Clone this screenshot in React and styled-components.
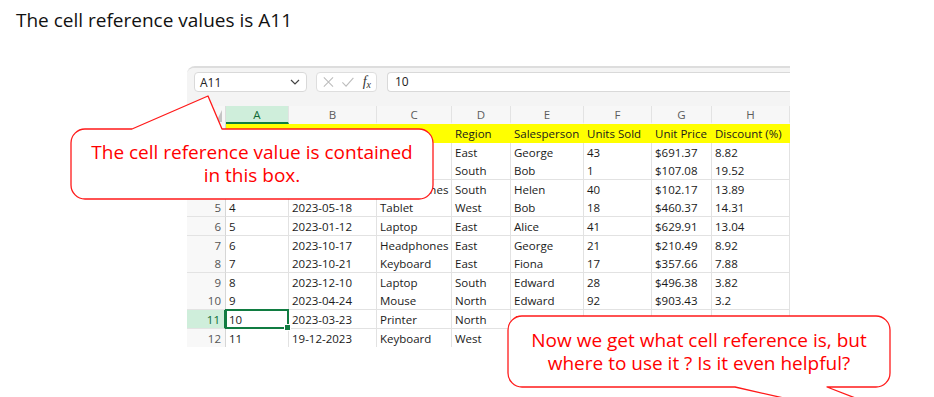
import React from 'react';
import styled, { createGlobalStyle } from 'styled-components';

const GlobalStyle = createGlobalStyle`
	html, body {
		margin: 0;
		padding: 0;
		background: #ffffff;
	}
	body {
		font-family: 'Open Sans', 'Noto Sans', sans-serif;
	}
`;

const COLS = '39px 63px 88px 75px 59px 73px 68px 60px 78px';
const LETTERS = ['A', 'B', 'C', 'D', 'E', 'F', 'G', 'H'];
const ROW_H = 18.6;

// cells hidden under the callouts are left blank
const rows = [
	['', '', '', 'Region', 'Salesperson', 'Units Sold', 'Unit Price', 'Discount (%)'],
	['', '', '', 'East', 'George', '43', '$691.37', '8.82'],
	['', '', '', 'South', 'Bob', '1', '$107.08', '19.52'],
	['', '', 'Headphones', 'South', 'Helen', '40', '$102.17', '13.89'],
	['4', '2023-05-18', 'Tablet', 'West', 'Bob', '18', '$460.37', '14.31'],
	['5', '2023-01-12', 'Laptop', 'East', 'Alice', '41', '$629.91', '13.04'],
	['6', '2023-10-17', 'Headphones', 'East', 'George', '21', '$210.49', '8.92'],
	['7', '2023-10-21', 'Keyboard', 'East', 'Fiona', '17', '$357.66', '7.88'],
	['8', '2023-12-10', 'Laptop', 'South', 'Edward', '28', '$496.38', '3.82'],
	['9', '2023-04-24', 'Mouse', 'North', 'Edward', '92', '$903.43', '3.2'],
	['10', '2023-03-23', 'Printer', 'North', 'Charlie', '55', '$781.22', '11.5'],
	['11', '19-12-2023', 'Keyboard', 'West', '', '', '', ''],
];

const Page = styled.div`
	position: relative;
	width: 934px;
	height: 397px;
	overflow: hidden;
	background: #fff;
`;

const Title = styled.h1`
	margin: 0;
	padding: 8px 0 0 16px;
	font-family: 'Open Sans', sans-serif;
	font-size: 19px;
	font-weight: 400;
	line-height: 24px;
	color: #111;
`;

const Sheet = styled.div`
	margin: 34px 0 0 187px;
	width: 603px;
	border-top: 2px solid #dddddd;
	border-top-left-radius: 8px;
	overflow: hidden;
	font-family: 'Open Sans', sans-serif;
	font-size: 11.5px;
	color: #1a1a1a;
`;

const Toolbar = styled.div`
	display: flex;
	align-items: flex-start;
	height: 38px;
	padding: 4px 0 0 7px;
	box-sizing: border-box;
	background: #f4f4f4;
`;

const NameBox = styled.div`
	display: flex;
	align-items: center;
	justify-content: space-between;
	width: 113px;
	height: 20px;
	padding: 0 6px 0 5px;
	box-sizing: border-box;
	background: #fff;
	border: 1px solid #d9d9d9;
	border-radius: 4px;
	font-size: 12px;
	color: #222;
`;

const FxBox = styled.div`
	display: flex;
	align-items: center;
	gap: 6px;
	width: 61px;
	height: 20px;
	margin-left: 9px;
	padding: 0 5px;
	box-sizing: border-box;
	background: #fff;
	border: 1px solid #dedede;
	border-radius: 4px;
`;

const Fx = styled.span`
	margin-left: 2px;
	font-family: 'Liberation Serif', serif;
	font-style: italic;
	font-size: 14px;
	color: #333;
	sub {
		font-size: 10px;
		vertical-align: -2px;
	}
`;

const FormulaInput = styled.div`
	flex: 1;
	height: 20px;
	margin-left: 10px;
	padding-left: 7px;
	box-sizing: border-box;
	background: #fff;
	border: 1px solid #d9d9d9;
	border-right: none;
	border-radius: 4px 0 0 4px;
	font-size: 12px;
	line-height: 18px;
	color: #222;
`;

const HeaderRow = styled.div`
	display: grid;
	grid-template-columns: ${COLS};
	height: 18px;
	background: #f7f7f7;
`;

const Corner = styled.div`
	display: flex;
	align-items: flex-end;
	justify-content: flex-end;
	padding: 0 3px 2px 0;
	border-right: 1px solid #dcdcdc;
`;

const ColHead = styled.div`
	display: flex;
	align-items: center;
	justify-content: center;
	box-sizing: border-box;
	border-right: 1px solid #e3e3e3;
	border-bottom: 2px solid ${(p) => (p.$active ? '#107c41' : '#f7f7f7')};
	background: ${(p) => (p.$active ? '#cfeedb' : 'transparent')};
	color: ${(p) => (p.$active ? '#0e6b35' : '#5c5c5c')};
	font-size: 11.5px;
`;

const Row = styled.div`
	display: grid;
	grid-template-columns: ${COLS};
	height: ${(p) => p.$h}px;
`;

const RowNum = styled.div`
	box-sizing: border-box;
	padding: 1px 4px 0 0;
	text-align: right;
	line-height: 17px;
	background: ${(p) => (p.$active ? '#cfeedb' : '#f8f8f8')};
	color: ${(p) => (p.$active ? '#0e6b35' : '#555')};
	border-right: ${(p) => (p.$active ? '2px solid #107c41' : '1px solid #d6d6d6')};
	border-bottom: 1px solid #e3e3e3;
`;

const Cell = styled.div`
	position: relative;
	box-sizing: border-box;
	padding: 1px 0 0 3px;
	line-height: 17px;
	white-space: nowrap;
	overflow: ${(p) => (p.$selected ? 'visible' : 'hidden')};
	background: ${(p) => (p.$fill ? '#ffff00' : '#fff')};
	border-right: 1px solid ${(p) => (p.$fill ? '#ffff00' : '#e2e2e2')};
	border-bottom: 1px solid ${(p) => (p.$fill ? '#ffff00' : '#e2e2e2')};

	${(p) =>
		p.$selected &&
		`
		&::after {
			content: '';
			position: absolute;
			inset: -1px;
			border: 2px solid #107c41;
			pointer-events: none;
		}
		&::before {
			content: '';
			position: absolute;
			right: -3px;
			bottom: -3px;
			width: 5px;
			height: 5px;
			background: #107c41;
			border: 1px solid #fff;
			z-index: 1;
		}
	`}
`;

const Bubble = styled.div`
	position: absolute;
	left: ${(p) => p.$x}px;
	top: ${(p) => p.$y}px;
	width: ${(p) => p.$w}px;
	height: ${(p) => p.$h}px;
	svg {
		position: absolute;
		left: 0;
		top: 0;
		overflow: visible;
	}
`;

const BubbleText = styled.div`
	position: relative;
	padding-top: ${(p) => p.$pad}px;
	text-align: center;
	font-family: 'Open Sans', sans-serif;
	font-size: 19px;
	line-height: 23px;
	color: #ff0000;
`;

const Callout = ({ x, y, w, h, pointer, pad, children }) => {
	const r = 14;
	const top = pointer.side === 'top'
		? `H ${pointer.a} L ${pointer.tx} ${pointer.ty} L ${pointer.b} 0 `
		: '';
	const bottom = pointer.side === 'bottom'
		? `H ${pointer.b} L ${pointer.tx} ${pointer.ty} L ${pointer.a} ${h} `
		: '';
	const d = `M ${r} 0 ${top}H ${w - r} A ${r} ${r} 0 0 1 ${w} ${r} V ${h - r} A ${r} ${r} 0 0 1 ${w - r} ${h} ${bottom}H ${r} A ${r} ${r} 0 0 1 0 ${h - r} V ${r} A ${r} ${r} 0 0 1 ${r} 0 Z`;
	return (
		<Bubble $x={x} $y={y} $w={w} $h={h}>
			<svg width={w} height={h}>
				<path d={d} fill='#fff' stroke='#ff1a1a' strokeWidth='1.3' strokeLinejoin='round' />
			</svg>
			<BubbleText $pad={pad}>{children}</BubbleText>
		</Bubble>
	);
};

const Cross = () => (
	<svg width='14' height='14' viewBox='0 0 14 14'>
		<path d='M2 2 L12 12 M12 2 L2 12' stroke='#bdbdbd' strokeWidth='1.2' fill='none' />
	</svg>
);

const Check = () => (
	<svg width='15' height='14' viewBox='0 0 15 14'>
		<path d='M1.5 7.5 L5.5 11.5 L13.5 2.5' stroke='#bdbdbd' strokeWidth='1.2' fill='none' />
	</svg>
);

const Chevron = () => (
	<svg width='10' height='6' viewBox='0 0 10 6'>
		<path d='M1 1 L5 5 L9 1' stroke='#444' strokeWidth='1.2' fill='none' />
	</svg>
);

const rowHeight = (i) => Math.round((i + 1) * ROW_H) - Math.round(i * ROW_H);

export default function App() {
	return (
		<>
			<GlobalStyle />
			<Page>
				<Title>The cell reference values is A11</Title>
				<Sheet>
					<Toolbar>
						<NameBox>
							A11
							<Chevron />
						</NameBox>
						<FxBox>
							<Cross />
							<Check />
							<Fx>
								f<sub>x</sub>
							</Fx>
						</FxBox>
						<FormulaInput>10</FormulaInput>
					</Toolbar>
					<HeaderRow>
						<Corner>
							<svg width='6' height='12' viewBox='0 0 6 12'>
								<polygon points='6,0 6,12 0,12' fill='#c4c4c4' />
							</svg>
						</Corner>
						{LETTERS.map((l, i) => (
							<ColHead key={l} $active={i === 0}>
								{l}
							</ColHead>
						))}
					</HeaderRow>
					{rows.map((row, ri) => (
						<Row key={ri} $h={rowHeight(ri)}>
							<RowNum $active={ri === 10}>{ri + 1}</RowNum>
							{row.map((v, ci) => (
								<Cell key={ci} $fill={ri === 0} $selected={ri === 10 && ci === 0}>
									{v}
								</Cell>
							))}
						</Row>
					))}
				</Sheet>

				<Callout
					x={71}
					y={129}
					w={362}
					h={70}
					pad={12}
					pointer={{ side: 'top', a: 61, b: 151, tx: 137, ty: -33 }}
				>
					The cell reference value is contained
					<br />
					in this box.
				</Callout>

				<Callout
					x={508}
					y={316}
					w={382}
					h={71}
					pad={13}
					pointer={{ side: 'bottom', a: 227, b: 319, tx: 448, ty: 121 }}
				>
					Now we get what cell reference is, but
					<br />
					where to use it ? Is it even helpful?
				</Callout>
			</Page>
		</>
	);
}
